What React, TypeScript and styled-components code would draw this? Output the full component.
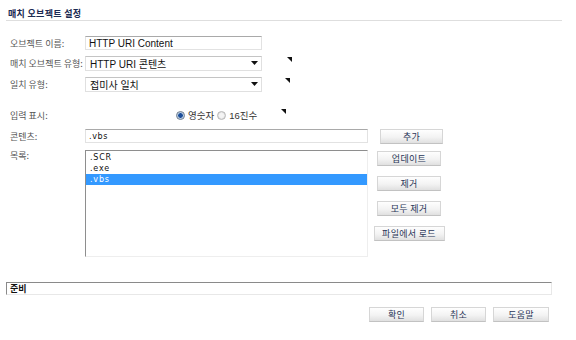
import { createGlobalStyle } from "styled-components"
import styled from "styled-components"

const GlobalStyle = createGlobalStyle`
  html, body {
    margin: 0;
    padding: 0;
    background: #fff;
  }
  body {
    font-family: "Noto Sans CJK KR", "DejaVu Sans", sans-serif;
    color: #333;
  }
`

const items = [".SCR", ".exe", ".vbs"]
const selected = ".vbs"

const Marker = ({ offset }: { offset: number }) => (
  <MarkerIcon $offset={offset} width="5" height="5" viewBox="0 0 5 5">
    <path d="M0 0 L5 0 L5 5 Z" fill="#111" />
  </MarkerIcon>
)

const Radio = ({ checked, label }: { checked?: boolean; label: string }) => (
  <RadioLabel>
    <RadioDot $checked={checked} />
    {label}
  </RadioLabel>
)

const App = () => {
  return (
    <Page>
      <GlobalStyle />
      <Title>매치 오브젝트 설정</Title>
      <Rule />
      <Form>
        <Row $top={15}>
          <Label>오브젝트 이름:</Label>
          <TextField $width={177} readOnly value="HTTP URI Content" />
        </Row>
        <Row $top={6}>
          <Label>매치 오브젝트 유형:</Label>
          <Select>
            <span>HTTP URI 콘텐츠</span>
            <Arrow />
          </Select>
          <Marker offset={25} />
        </Row>
        <Row $top={7}>
          <Label>일치 유형:</Label>
          <Select>
            <span>접미사 일치</span>
            <Arrow />
          </Select>
          <Marker offset={23} />
        </Row>
        <Row $top={17}>
          <Label>입력 표시:</Label>
          <RadioGroup>
            <Radio checked label="영숫자" />
            <Radio label="16진수" />
          </RadioGroup>
          <Marker offset={24} />
        </Row>
        <Row $top={7}>
          <Label>콘텐츠:</Label>
          <TextField $width={283} $mono readOnly value=".vbs" />
          <Button $width={63} $left={12}>추가</Button>
        </Row>
        <ListRow>
          <Label>목록:</Label>
          <ListBox>
            {items.map((item) => (
              <ListItem key={item} $selected={item === selected}>
                {item}
              </ListItem>
            ))}
          </ListBox>
          <ButtonColumn>
            <Button $width={64}>업데이트</Button>
            <Button $width={64}>제거</Button>
            <Button $width={64}>모두 제거</Button>
            <Button $width={71}>파일에서 로드</Button>
          </ButtonColumn>
        </ListRow>
      </Form>
      <StatusBar>준비</StatusBar>
      <Footer>
        <Button $width={55}>확인</Button>
        <Button $width={55}>취소</Button>
        <Button $width={56}>도움말</Button>
      </Footer>
    </Page>
  )
}

const Arrow = () => (
  <svg width="7" height="4" viewBox="0 0 7 4">
    <path d="M0 0 L7 0 L3.5 4 Z" fill="#111" />
  </svg>
)

const Page = styled.div`
  width: 576px;
  height: 340px;
  overflow: hidden;
`

const Title = styled.div`
  padding: 8px 0 0 8px;
  font-size: 9px;
  line-height: 11px;
  font-weight: bold;
  letter-spacing: 0.3px;
  color: #1b2a52;
`

const Rule = styled.div`
  margin: 1px 0 0 6px;
  width: 556px;
  border-top: 1px solid #dedede;
`

const Form = styled.div`
  padding-left: 10px;
`

const Row = styled.div<{ $top: number }>`
  display: flex;
  align-items: center;
  height: 14px;
  margin-top: ${(p) => p.$top}px;
`

const Label = styled.div`
  width: 75px;
  flex: none;
  font-size: 9px;
  line-height: 11px;
  color: #555;
  white-space: nowrap;
`

const TextField = styled.input<{ $width: number; $mono?: boolean }>`
  box-sizing: border-box;
  width: ${(p) => p.$width}px;
  height: 14px;
  margin: 0;
  padding: 0 0 0 3px;
  border: 1px solid #e2e2e2;
  border-top-color: #a9a9a9;
  background: #fff;
  font-family: ${(p) => (p.$mono ? '"DejaVu Sans", sans-serif' : '"Liberation Sans", Arial, sans-serif')};
  font-size: ${(p) => (p.$mono ? 8 : 10)}px;
  letter-spacing: ${(p) => (p.$mono ? 0.6 : 0)}px;
  color: #111;
  outline: none;
`

const Select = styled.div`
  box-sizing: border-box;
  width: 177px;
  height: 15px;
  display: flex;
  align-items: center;
  justify-content: space-between;
  padding: 0 3px 0 4px;
  border: 1px solid #e0e0e0;
  border-top-color: #c4c4c4;
  font-family: "Liberation Sans", "Noto Sans CJK KR", sans-serif;
  font-size: 10px;
  color: #111;
`

const MarkerIcon = styled.svg<{ $offset: number }>`
  margin-left: ${(p) => p.$offset}px;
  margin-top: -8px;
  flex: none;
`

const RadioGroup = styled.div`
  display: flex;
  align-items: center;
  gap: 3px;
  margin-left: 91px;
`

const RadioLabel = styled.label`
  display: flex;
  align-items: center;
  gap: 3px;
  font-family: "Liberation Sans", "Noto Sans CJK KR", sans-serif;
  font-size: 9.5px;
  color: #333;
`

const RadioDot = styled.span<{ $checked?: boolean }>`
  box-sizing: border-box;
  width: 9px;
  height: 9px;
  border-radius: 50%;
  border: 1px solid ${(p) => (p.$checked ? "#6a7a8c" : "#b8b8b8")};
  background: ${(p) =>
    p.$checked
      ? "radial-gradient(circle, #1e4f9a 0 2px, #9fb9d8 2.5px, #e6eef6 4px)"
      : "radial-gradient(circle, #f4f4f4 0 2px, #d6d6d6 4px)"};
`

const Button = styled.div<{ $width: number; $left?: number }>`
  box-sizing: border-box;
  width: ${(p) => p.$width}px;
  height: 15px;
  margin-left: ${(p) => p.$left ?? 0}px;
  flex: none;
  display: flex;
  align-items: center;
  justify-content: center;
  border: 1px solid #d6d6d6;
  border-bottom-color: #c2c2c2;
  background: linear-gradient(#fefefe, #f3f3f3 55%, #e0e0e0);
  font-size: 9px;
  letter-spacing: 0.3px;
  color: #2a3658;
  white-space: nowrap;
`

const ListRow = styled.div`
  display: flex;
  align-items: flex-start;
  margin-top: 7px;
`

const ListBox = styled.ul`
  box-sizing: border-box;
  width: 283px;
  height: 107px;
  margin: 0;
  padding: 1px 0 0;
  list-style: none;
  border: 1px solid #eeeeee;
  border-top-color: #8e8e8e;
  border-left-color: #8e8e8e;
`

const ListItem = styled.li<{ $selected?: boolean }>`
  height: 11px;
  line-height: 11px;
  padding-left: 4px;
  font-family: "DejaVu Sans", sans-serif;
  font-size: 8px;
  letter-spacing: 0.8px;
  color: ${(p) => (p.$selected ? "#fff" : "#111")};
  background: ${(p) => (p.$selected ? "#3399ff" : "transparent")};
`

const ButtonColumn = styled.div`
  width: 72px;
  margin-left: 5px;
  display: flex;
  flex-direction: column;
  align-items: center;
  gap: 10px;
  padding-top: 1px;
`

const StatusBar = styled.div`
  box-sizing: border-box;
  width: 546px;
  height: 13px;
  margin: 25px 0 0 6px;
  padding-left: 3px;
  border: 1px solid #e8e8e8;
  border-top-color: #8a8a8a;
  border-left-color: #8a8a8a;
  font-size: 9px;
  line-height: 11px;
  font-weight: bold;
  color: #111;
`

const Footer = styled.div`
  display: flex;
  justify-content: flex-end;
  gap: 7px;
  margin-top: 12px;
  padding-right: 27px;
`

export default App
